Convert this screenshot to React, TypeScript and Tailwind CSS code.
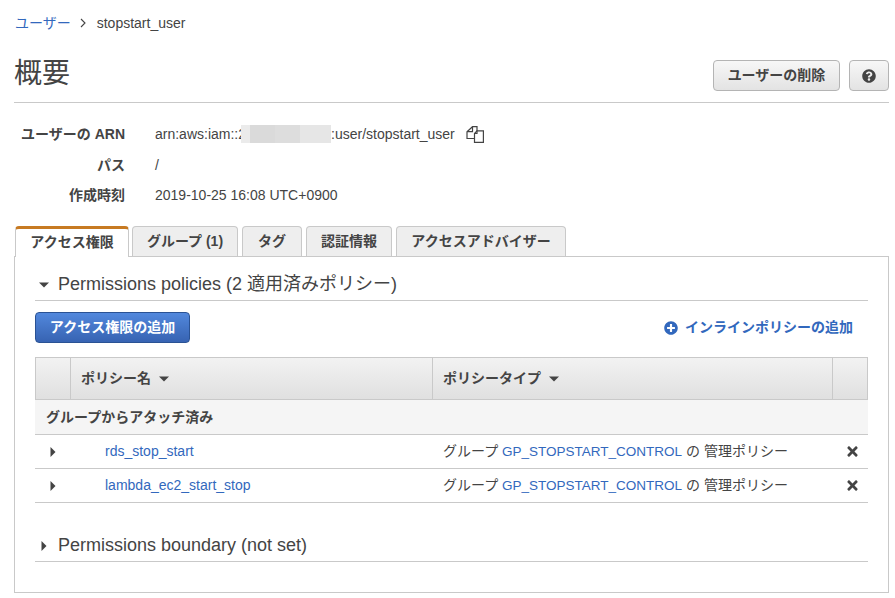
import { FaPlusCircle, FaQuestionCircle, FaTimes } from 'react-icons/fa';

const fontStack = "font-['Liberation_Sans','Noto_Sans_CJK_JP',sans-serif]";

const CaretDown = ({ className }: { className?: string }) => (
  <svg viewBox="0 0 10 6" className={className} fill="currentColor">
    <path d="M0 0.5h10L5 5.5z" />
  </svg>
);

const CaretRight = ({ className }: { className?: string }) => (
  <svg viewBox="0 0 6 10" className={className} fill="currentColor">
    <path d="M0.5 0v10L5.5 5z" />
  </svg>
);

const CopyIcon = () => (
  <svg viewBox="0 0 18 17" className="ml-[11px] h-[17px] w-[18px]" fill="none" stroke="#444" strokeWidth="1.2">
    <path d="M11 5V0.700H6.500L1 5.700V12.500H8" />
    <path d="M6.500 0.700V5.700H1" />
    <path d="M11 4.800H17.400V16.400H8.500V7.500z" />
    <path d="M11 4.800V7.500H8.500" />
  </svg>
);

const tabs = [
  { label: 'グループ (1)', width: 'w-[106px]' },
  { label: 'タグ', width: 'w-[60px]' },
  { label: '認証情報', width: 'w-[86px]' },
  { label: 'アクセスアドバイザー', width: 'w-[170px]' },
];

const details = [
  { label: 'パス', value: '/' },
  { label: '作成時刻', value: '2019-10-25 16:08 UTC+0900' },
];

const policies = ['rds_stop_start', 'lambda_ec2_start_stop'];

const PolicyRow = ({ name }: { name: string }) => (
  <div className="flex h-[34px] items-center border-b border-[#c9c9c9] text-[14px] text-[#444]">
    <div className="flex w-[35px] shrink-0 justify-center text-[#444]">
      <CaretRight className="h-[10px] w-[6px]" />
    </div>
    <a className="w-[373px] shrink-0 pl-[35px] text-[#3268bd]">{name}</a>
    <div className="flex-1 whitespace-nowrap">
      グループ <a className="text-[13.500px] text-[#3268bd]">GP_STOPSTART_CONTROL</a> の 管理ポリシー
    </div>
    <div className="flex w-[36px] shrink-0 justify-center pl-[4px]">
      <FaTimes className="text-[15px] text-[#444]" />
    </div>
  </div>
);

export default function App() {
  return (
    <div className={`${fontStack} h-[598px] w-[895px] overflow-hidden bg-white px-[14px] pr-[6px] text-[14px] text-[#444]`}>
      {/* Breadcrumb */}
      <div className="flex h-[46px] items-center pl-[1px]">
        <a className="text-[#3268bd]">ユーザー</a>
        <svg viewBox="0 0 6 10" className="ml-[9px] mr-[11px] h-[10px] w-[6px]" fill="none" stroke="#444" strokeWidth="1.1">
          <path d="M1 1l4 4-4 4" />
        </svg>
        <span>stopstart_user</span>
      </div>

      {/* Title */}
      <div className="flex h-[57px] items-center justify-between border-b border-[#c9c9c9]">
        <h1 className="text-[28px] leading-none text-[#444]">概要</h1>
        <div className="mt-[-1px] flex gap-[9px] pt-[4px]">
          <button className="h-[31px] w-[127px] rounded-[4px] border border-[#b4b4b4] bg-gradient-to-b from-[#f7f7f7] to-[#e3e3e3] font-bold text-[#444]">
            ユーザーの削除
          </button>
          <button className="flex h-[31px] w-[40px] items-center justify-center rounded-[4px] border border-[#b4b4b4] bg-gradient-to-b from-[#f7f7f7] to-[#e3e3e3]">
            <FaQuestionCircle className="text-[14px] text-[#444]" />
          </button>
        </div>
      </div>

      {/* Details */}
      <div className="mt-[16px] flex flex-col">
        <div className="flex h-[31px] items-center">
          <div className="w-[111px] whitespace-nowrap text-right font-bold">ユーザーの ARN</div>
          <div className="ml-[30px] flex items-center">
            <span className="whitespace-nowrap">arn:aws:iam::2</span>
            {/* masked account id, sits over the end of the text */}
            <span className="relative -ml-[5px] -mt-[2px] flex h-[18px] w-[90px]">
              <span className="w-[9px] bg-[#ebebeb]" />
              <span className="w-[25px] bg-[#dadada]" />
              <span className="w-[25px] bg-[#dddddd]" />
              <span className="w-[31px] bg-[#e6e6e6]" />
            </span>
            <span>:user/stopstart_user</span>
            <CopyIcon />
          </div>
        </div>
        {details.map((row) => (
          <div key={row.label} className="flex h-[30.5px] items-center">
            <div className="w-[111px] text-right font-bold">{row.label}</div>
            <div className="ml-[30px]">{row.value}</div>
          </div>
        ))}
      </div>

      {/* Tabs */}
      <div className="mt-[15px] flex h-[30px] items-end pl-[1px]">
        <div className="relative z-10 mr-[3px] flex h-[31px] w-[114px] -mb-[1px] items-center justify-center rounded-t-[4px] border-x border-t-[3px] border-x-[#c9c9c9] border-t-[#c77a22] bg-white pb-[1px] font-bold">
          アクセス権限
        </div>
        <div className="flex gap-[4px]">
          {tabs.map((tab) => (
            <div
              key={tab.label}
              className={`${tab.width} flex h-[30px] items-center justify-center whitespace-nowrap rounded-t-[4px] border-x border-t border-[#c9c9c9] bg-[#eeeeee] font-bold`}
            >
              {tab.label}
            </div>
          ))}
        </div>
      </div>

      {/* Panel */}
      <div className="h-[337px] border border-[#c9c9c9] px-[20px]">
        <div className="flex h-[44px] items-center gap-[9px] border-b border-[#c9c9c9] pl-[4px] pt-[12px]">
          <CaretDown className="h-[6px] w-[10px] text-[#444]" />
          <span className="text-[18px]">Permissions policies (2 適用済みポリシー)</span>
        </div>

        <div className="mt-[11px] flex items-center justify-between">
          <button className="h-[31px] w-[155px] rounded-[4px] border border-[#2a5294] bg-gradient-to-b from-[#5288dd] to-[#3763b2] font-bold text-white">
            アクセス権限の追加
          </button>
          <a className="mr-[15px] flex items-center gap-[7px] font-bold text-[#3268bd]">
            <FaPlusCircle className="text-[14px]" />
            インラインポリシーの追加
          </a>
        </div>

        {/* Table */}
        <div className="mt-[14px]">
          <div className="flex h-[43px] border border-[#c9c9c9] bg-gradient-to-b from-[#f2f2f2] to-[#e0e0e0] font-bold">
            <div className="w-[35px] shrink-0 border-r border-[#c9c9c9]" />
            <div className="flex w-[362px] shrink-0 items-center gap-[8px] border-r border-[#c9c9c9] pl-[10px]">
              ポリシー名
              <CaretDown className="h-[6px] w-[10px]" />
            </div>
            <div className="flex w-[400px] shrink-0 items-center gap-[8px] border-r border-[#c9c9c9] pl-[10px]">
              ポリシータイプ
              <CaretDown className="h-[6px] w-[10px]" />
            </div>
          </div>
          <div className="flex h-[35px] items-center border-b border-[#c9c9c9] bg-[#f5f5f5] pl-[11px] font-bold">
            グループからアタッチ済み
          </div>
          {policies.map((name) => (
            <PolicyRow key={name} name={name} />
          ))}
        </div>

        {/* Boundary */}
        <div className="mt-[25px] flex h-[34px] items-center gap-[11px] border-b border-[#c9c9c9] pl-[6px] pt-[2px]">
          <CaretRight className="h-[10px] w-[6px] text-[#444]" />
          <span className="text-[18px]">Permissions boundary (not set)</span>
        </div>
      </div>
    </div>
  );
}
